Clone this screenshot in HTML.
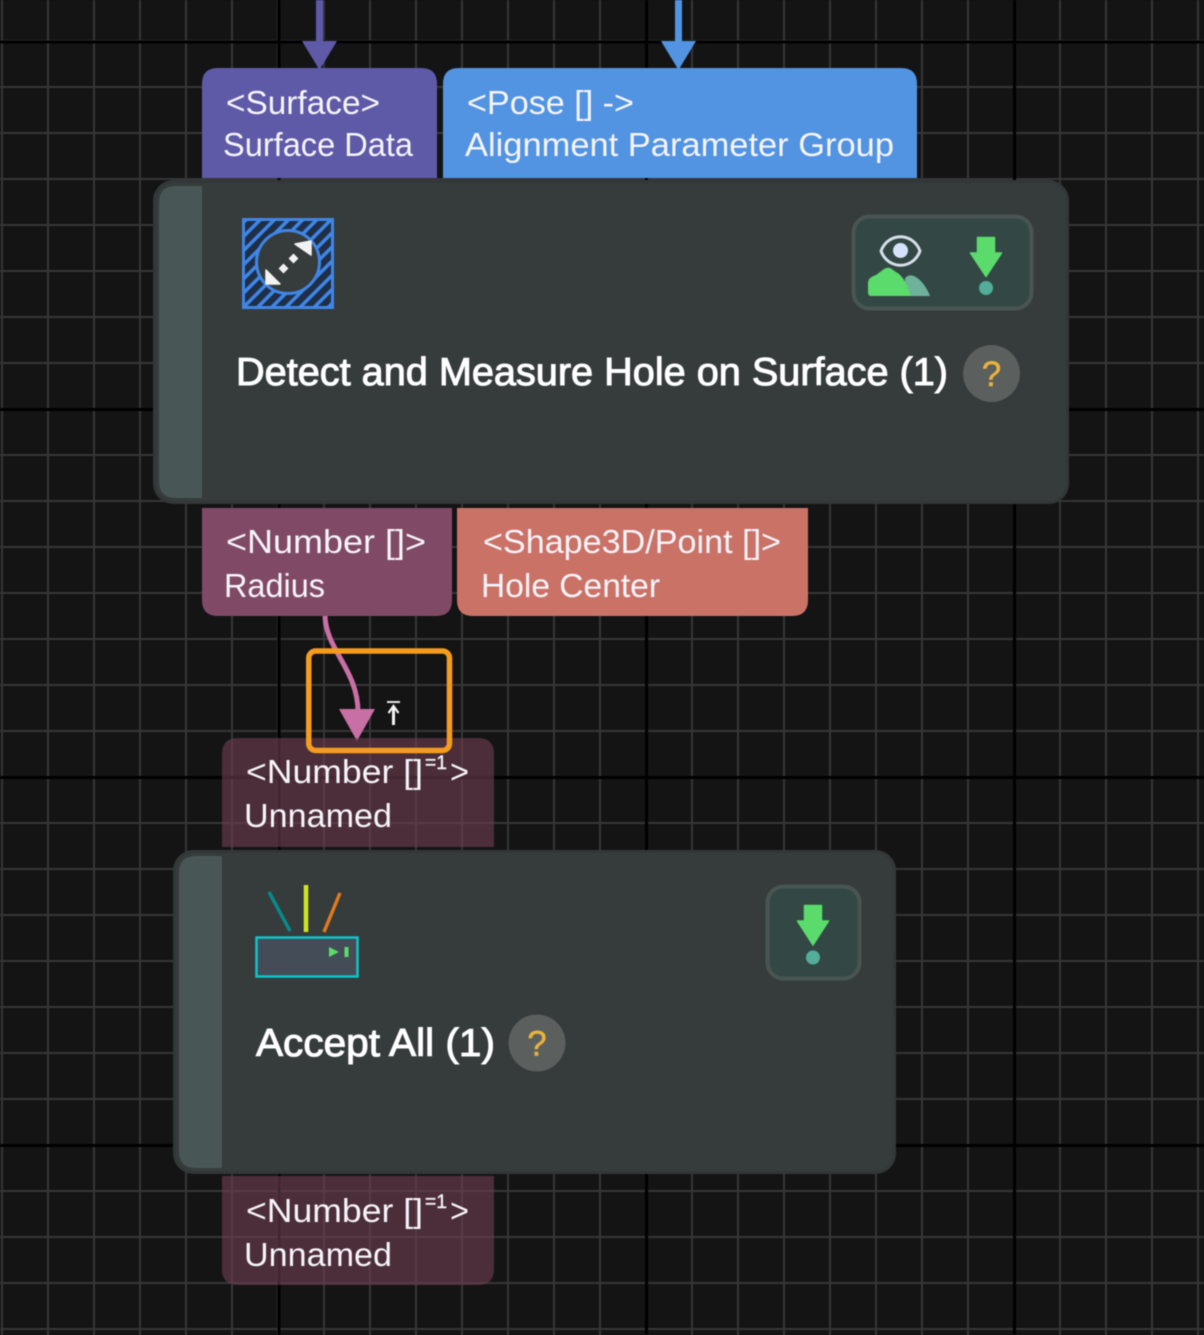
<!DOCTYPE html>
<html><head><meta charset="utf-8"><style>
html,body{margin:0;padding:0;background:#141414;width:1204px;height:1335px;overflow:hidden}
svg{display:block;filter:blur(.4px)}
text{font-family:"Liberation Sans",sans-serif;fill:#fff}
.p{font-size:33px;fill:#f6f4fa}
.t{font-size:39px;stroke:#fff;stroke-width:1px}
.q{font-size:35px;fill:#e8b23e;stroke:#e8b23e;stroke-width:.5px;text-anchor:middle}
.s{font-size:19px;fill:#f6f4fa;stroke:#f6f4fa;stroke-width:.4px}
</style></head><body>
<svg width="1204" height="1335" viewBox="0 0 1204 1335" xmlns="http://www.w3.org/2000/svg">
<defs>
<pattern id="g" x="1" y="-6" width="46" height="46" patternUnits="userSpaceOnUse">
<rect x="0" y="0" width="2" height="46" fill="#363636"/><rect x="0" y="0" width="46" height="2" fill="#363636"/>
</pattern>
<pattern id="h" width="10" height="10" patternUnits="userSpaceOnUse" patternTransform="rotate(-45 243 219)">
<rect width="10" height="10" fill="#202f48"/><rect width="10" height="3.500" fill="#3f86e6"/>
</pattern>
</defs>
<rect width="1204" height="1335" fill="#141414"/>
<rect width="1204" height="1335" fill="url(#g)"/>
<g fill="#000">
<rect x="277.500" y="0" width="3" height="1335"/><rect x="645" y="0" width="3" height="1335"/><rect x="1013" y="0" width="3" height="1335"/>
<rect x="0" y="40.500" width="1204" height="3"/><rect x="0" y="408" width="1204" height="3"/><rect x="0" y="776" width="1204" height="3"/><rect x="0" y="1144" width="1204" height="3"/>
</g>

<!-- input wires -->
<rect x="316" y="0" width="7" height="44" fill="#5f5aa8"/>
<path d="M302 41H337L319.500 70Z" fill="#5f5aa8"/>
<rect x="675" y="0" width="7" height="44" fill="#5294e2"/>
<path d="M661 41H696L678.500 70Z" fill="#5294e2"/>

<!-- top ports -->
<path d="M202 178V84Q202 68 218 68H421Q437 68 437 84V178Z" fill="#5f5aa8"/>
<path d="M443 178V84Q443 68 459 68H901Q917 68 917 84V178Z" fill="#5294e2"/>
<text class="p" x="226" y="114" textLength="154" lengthAdjust="spacingAndGlyphs">&lt;Surface&gt;</text>
<text class="p" x="223" y="156" textLength="190" lengthAdjust="spacingAndGlyphs">Surface Data</text>
<text class="p" x="467" y="114" textLength="167" lengthAdjust="spacingAndGlyphs">&lt;Pose [] -&gt;</text>
<text class="p" x="465" y="156" textLength="429" lengthAdjust="spacingAndGlyphs">Alignment Parameter Group</text>

<!-- node 1 -->
<rect x="154.500" y="181.500" width="913" height="321" rx="19" fill="#363b3b" stroke="#323737" stroke-width="3"/>
<path d="M202 186V498H176Q159 498 159 481V203Q159 186 176 186Z" fill="#485755"/>
<rect x="243.500" y="219.500" width="89" height="88" fill="url(#h)" stroke="#3f86e6" stroke-width="3"/>
<circle cx="288" cy="262" r="31.500" fill="#363b3b" stroke="#3f86e6" stroke-width="3"/>
<g fill="#f2f2f2" stroke="#f2f2f2" stroke-width="1.500" stroke-linejoin="round">
<path d="M295 244L311 241L311 255Z"/>
<path d="M266 270L280 284L266 284Z"/>
</g>
<g fill="#f2f2f2">
<rect x="290" y="255" width="7" height="7" transform="rotate(45 293.500 258.500)"/>
<rect x="280" y="265" width="7" height="7" transform="rotate(45 283.500 268.500)"/>
</g>
<rect x="853.500" y="216.500" width="178" height="92" rx="16" fill="#334844" stroke="#495552" stroke-width="4"/>
<path d="M881 251C888 232 913 232 920 251C913 270 888 270 881 251Z" fill="none" stroke="#d6deea" stroke-width="3"/>
<circle cx="900.500" cy="250.500" r="7.500" fill="#d6e2fa"/>
<path d="M905 296V278Q909 274 914 276Q924 281 930 296Z" fill="#6fb29c"/>
<path d="M871 296Q868 296 868 292V282Q869 277 876 275L884 269Q889 266 893 270L899 274Q906 280 911 296Z" fill="#5adb6b"/>
<path d="M977.500 237.500H994.500V253H1001.500L986 276.500L970.500 253H977.500Z" fill="#5adb6b" stroke="#5adb6b" stroke-width="1.500" stroke-linejoin="round"/>
<circle cx="986" cy="288" r="7" fill="#52ad99"/>
<text class="t" x="236" y="385" textLength="712" lengthAdjust="spacingAndGlyphs">Detect and Measure Hole on Surface (1)</text>
<circle cx="991.500" cy="373.500" r="28.500" fill="#5b5f5d"/>
<text class="q" x="991.500" y="386">?</text>

<!-- lower ports -->
<path d="M202 508H452V600Q452 616 436 616H218Q202 616 202 600Z" fill="#804a66"/>
<path d="M457 508H808V600Q808 616 792 616H473Q457 616 457 600Z" fill="#cb7267"/>
<text class="p" x="226" y="553" textLength="200" lengthAdjust="spacingAndGlyphs">&lt;Number []&gt;</text>
<text class="p" x="224" y="597" textLength="101" lengthAdjust="spacingAndGlyphs">Radius</text>
<text class="p" x="483" y="553" textLength="298" lengthAdjust="spacingAndGlyphs">&lt;Shape3D/Point []&gt;</text>
<text class="p" x="481" y="597" textLength="179" lengthAdjust="spacingAndGlyphs">Hole Center</text>

<!-- connection -->
<path d="M325 616C326 650 358 670 358 712" fill="none" stroke="#c86fa5" stroke-width="5"/>
<path d="M339 709H375L357 741Z" fill="#c86fa5"/>
<rect x="387" y="701" width="13" height="2" fill="#e6e6e6"/>
<path d="M393.500 706V725" fill="none" stroke="#f4f4f4" stroke-width="3"/>
<path d="M388.500 713L393.500 706L398.500 713" fill="none" stroke="#f4f4f4" stroke-width="2.200"/>

<!-- unnamed port -->
<path d="M222 847V754Q222 738 238 738H478Q494 738 494 754V847Z" fill="#6f3f52" fill-opacity=".6"/>
<rect x="308.750" y="651" width="140.750" height="99.500" rx="7" fill="none" stroke="#f39c1f" stroke-width="5.500"/>
<text class="p" x="246" y="783" textLength="177" lengthAdjust="spacingAndGlyphs">&lt;Number []</text>
<text class="s" x="425" y="769" textLength="22" lengthAdjust="spacingAndGlyphs">=1</text>
<text class="p" x="450" y="783" textLength="19" lengthAdjust="spacingAndGlyphs">&gt;</text>
<text class="p" x="244" y="827" textLength="148" lengthAdjust="spacingAndGlyphs">Unnamed</text>

<!-- node 2 -->
<rect x="174.500" y="851.500" width="720" height="321" rx="19" fill="#363b3b" stroke="#323737" stroke-width="3"/>
<path d="M222 856V1168H196Q179 1168 179 1151V873Q179 856 196 856Z" fill="#485755"/>
<rect x="256.500" y="937.500" width="101" height="39" fill="#434c57" stroke="#10c4c8" stroke-width="2.500"/>
<path d="M329 947L339 952L329 957Z" fill="#5adb6b"/>
<rect x="344.500" y="947" width="4" height="10" fill="#5adb6b"/>
<path d="M269 892L290 931" stroke="#078a8c" stroke-width="3.500"/>
<path d="M306 885V932" stroke="#cfe61c" stroke-width="4.500"/>
<path d="M340 893L324 932" stroke="#e07a1e" stroke-width="3.500"/>
<rect x="767.500" y="886.500" width="92" height="92" rx="16" fill="#334844" stroke="#495552" stroke-width="4"/>
<path d="M804.500 905.500H821.500V921H828.500L813 945L797.500 921H804.500Z" fill="#5adb6b" stroke="#5adb6b" stroke-width="1.500" stroke-linejoin="round"/>
<circle cx="813" cy="957.500" r="7" fill="#52ad99"/>
<text class="t" x="256" y="1056" textLength="239" lengthAdjust="spacingAndGlyphs">Accept All (1)</text>
<circle cx="537" cy="1043" r="28.500" fill="#5b5f5d"/>
<text class="q" x="537" y="1055.500">?</text>

<!-- bottom port -->
<path d="M222 1176H494V1269Q494 1285 478 1285H238Q222 1285 222 1269Z" fill="#6f3f52" fill-opacity=".6"/>
<text class="p" x="246" y="1222" textLength="177" lengthAdjust="spacingAndGlyphs">&lt;Number []</text>
<text class="s" x="425" y="1208" textLength="22" lengthAdjust="spacingAndGlyphs">=1</text>
<text class="p" x="450" y="1222" textLength="19" lengthAdjust="spacingAndGlyphs">&gt;</text>
<text class="p" x="244" y="1266" textLength="148" lengthAdjust="spacingAndGlyphs">Unnamed</text>
</svg>
</body></html>
